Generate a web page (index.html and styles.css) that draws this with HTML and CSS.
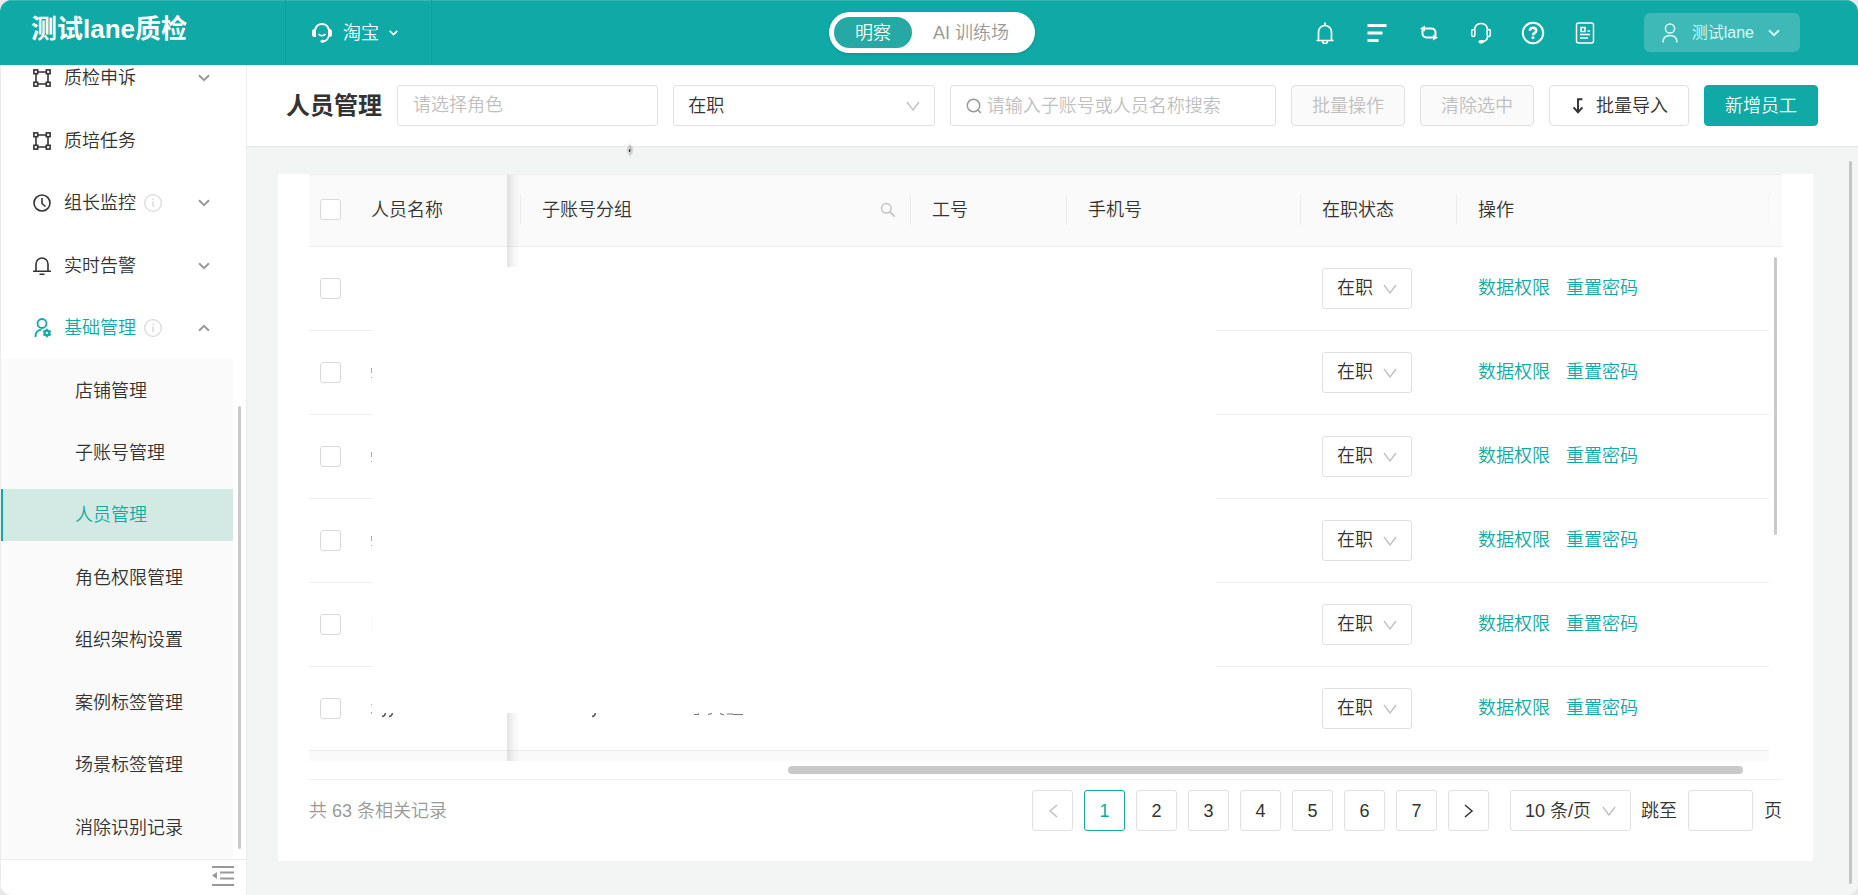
FILE: index.html
```html
<!DOCTYPE html>
<html lang="zh-CN">
<head>
<meta charset="utf-8">
<title>人员管理</title>
<link rel="stylesheet" href="styles.css">
</head>
<body>
<svg class="defs" aria-hidden="true">
  <symbol id="i-headset" viewBox="0 0 22 22"><path d="M4 8C5 4 7.500 2 11 2s6 2 7 6" fill="none" stroke="currentColor" stroke-width="2"/><path d="M5 7v8H3.500A2.500 2.500 0 0 1 1 12.500v-3A2.500 2.500 0 0 1 3.500 7zM17 7v8h1.500a2.500 2.500 0 0 0 2.500-2.500v-3A2.500 2.500 0 0 0 18.500 7z" fill="currentColor"/><path d="M17.500 14.500c-.5 3-2.500 4.500-5.500 4.800M7.500 12c1.800 2.400 5.200 2.400 7 0" fill="none" stroke="currentColor" stroke-width="1.600"/><rect x="9.500" y="17.800" width="4" height="3" rx="1.500" fill="currentColor"/></symbol>
  <symbol id="i-headset2" viewBox="0 0 22 22"><path d="M4.500 8.500C4.500 4 7 1.500 11 1.500s6.500 2.500 6.500 7M17.500 14.500c0 3-2 4.700-5 5" fill="none" stroke="currentColor" stroke-width="1.700"/><rect x="1.700" y="7.500" width="3.200" height="7" rx="1.500" fill="none" stroke="currentColor" stroke-width="1.500"/><rect x="17.100" y="7.500" width="3.200" height="7" rx="1.500" fill="none" stroke="currentColor" stroke-width="1.500"/><rect x="8.500" y="18" width="5.500" height="3.600" rx="1.800" fill="currentColor"/></symbol>
  <symbol id="i-bell" viewBox="0 0 22 22"><path d="M4.500 18.500V10a6.500 6.500 0 0 1 13 0v8.500M2.500 18.500h17M11 .5v2.500" fill="none" stroke="currentColor" stroke-width="1.700"/><path d="M8.500 19a2.500 2.500 0 0 0 5 0" fill="none" stroke="currentColor" stroke-width="1.700"/></symbol>
  <symbol id="i-bell2" viewBox="0 0 18 18"><path d="M3 14V7a6 6 0 0 1 12 0v7M0 14.300h18M6.500 17.300h5" fill="none" stroke="currentColor" stroke-width="1.600"/></symbol>
  <symbol id="i-frame" viewBox="0 0 18 18"><g fill="none" stroke="currentColor" stroke-width="1.600"><path d="M5 3h8M5 15h8M3 5v8M15 5v8"/><rect x=".9" y=".9" width="3.800" height="3.800"/><rect x="13.300" y=".9" width="3.800" height="3.800"/><rect x=".9" y="13.300" width="3.800" height="3.800"/><rect x="13.300" y="13.300" width="3.800" height="3.800"/></g></symbol>
  <symbol id="i-clock" viewBox="0 0 18 18"><g fill="none" stroke="currentColor" stroke-width="1.600"><circle cx="9" cy="9" r="8"/><path d="M9 4v5.500l3.500 3"/></g></symbol>
  <symbol id="i-useradmin" viewBox="0 0 18 20"><g fill="none" stroke="currentColor" stroke-width="1.800"><circle cx="9" cy="5.500" r="4.500"/><path d="M2.500 19c0-4 2-7 6-7.300"/></g><path d="M14 10.800v8.400M10.400 12.900l7.200 4.200M10.400 17.100l7.200-4.200" stroke="currentColor" stroke-width="1.800"/><circle cx="14" cy="15" r="2.400" stroke="currentColor" stroke-width="2.200" fill="#fff"/></symbol>
  <symbol id="i-info" viewBox="0 0 18 18"><circle cx="9" cy="9" r="8.300" fill="none" stroke="currentColor" stroke-width="1.300"/><path d="M9 7.500V13M9 4.500v1.400" stroke="currentColor" stroke-width="1.500"/></symbol>
  <symbol id="i-down" viewBox="0 0 12 8"><path d="M1 1.200l5 5 5-5" fill="none" stroke="currentColor" stroke-width="2"/></symbol>
  <symbol id="i-up" viewBox="0 0 12 8"><path d="M1 6.800l5-5 5 5" fill="none" stroke="currentColor" stroke-width="2"/></symbol>
  <symbol id="i-search" viewBox="0 0 16 16"><circle cx="7.500" cy="7.500" r="6.200" fill="none" stroke="currentColor" stroke-width="1.500"/><path d="M12 12l2.800 3" stroke="currentColor" stroke-width="1.500"/></symbol>
  <symbol id="i-find" viewBox="0 0 16 16"><circle cx="6.300" cy="6.300" r="4.800" fill="none" stroke="currentColor" stroke-width="1.400"/><path d="M9.800 9.800l5 5" stroke="currentColor" stroke-width="1.600"/></symbol>
  <symbol id="i-swap" viewBox="0 0 20 18"><path d="M4 4.500h8.500a4 4 0 0 1 4 4V12M16 13.500H7.500a4 4 0 0 1-4-4V6" fill="none" stroke="currentColor" stroke-width="2"/><path d="M1 4.500l5-3v6zM19 13.500l-5-3v6z" fill="currentColor"/></symbol>
  <symbol id="i-user" viewBox="0 0 16 20"><circle cx="8" cy="5.500" r="4.600" fill="none" stroke="currentColor" stroke-width="1.500"/><path d="M1 19.500c0-4.500 2.500-7 7-7s7 2.500 7 7" fill="none" stroke="currentColor" stroke-width="1.600"/></symbol>
</svg>
<div class="app">
  <header class="topbar">
    <div class="brand">测试lane质检</div>
    <button class="platform"><svg class="ic22"><use href="#i-headset"/></svg><span>淘宝</span><svg class="caret-s"><use href="#i-down"/></svg></button>
    <div class="modes">
      <button class="mode mode-on">明察</button><button class="mode">AI 训练场</button>
    </div>
    <div class="tools">
      <button class="tool" aria-label="通知"><svg class="ic22"><use href="#i-bell"/></svg></button>
      <button class="tool" aria-label="列表"><svg class="ic22" viewBox="0 0 22 22"><path d="M1.500 3.500h19M1.500 11h15M1.500 18.500h11" stroke="currentColor" stroke-width="3"/></svg></button>
      <button class="tool" aria-label="切换"><svg class="ic20"><use href="#i-swap"/></svg></button>
      <button class="tool" aria-label="客服"><svg class="ic22"><use href="#i-headset2"/></svg></button>
      <button class="tool" aria-label="帮助"><svg class="ic24" viewBox="0 0 24 24"><circle cx="12" cy="12" r="10.200" fill="none" stroke="currentColor" stroke-width="2"/><path d="M8.800 9.800c0-4 6.400-4 6.400 0 0 2.200-3.200 2.100-3.200 4.400M12 15.600v2.400" fill="none" stroke="currentColor" stroke-width="2.600"/></svg></button>
      <button class="tool" aria-label="文档"><svg class="ic22" viewBox="0 0 22 22"><g fill="none" stroke="currentColor" stroke-width="1.500"><rect x="2.500" y="1" width="17" height="20" rx="2"/><rect x="7" y="5.500" width="4" height="4"/><path d="M6 12.500h10M6 16h8M13.500 9h2.500"/></g></svg></button>
    </div>
    <button class="account"><svg class="ic-user"><use href="#i-user"/></svg><span>测试lane</span><svg class="caret"><use href="#i-down"/></svg></button>
  </header>

  <div class="body">
    <aside class="sidebar">
      <nav class="menu">
        <ul class="menu-top">
          <li><a class="item" href="#"><svg class="ic18"><use href="#i-frame"/></svg><span>质检申诉</span><svg class="caret end"><use href="#i-down"/></svg></a></li>
          <li><a class="item" href="#"><svg class="ic18"><use href="#i-frame"/></svg><span>质培任务</span></a></li>
          <li><a class="item" href="#"><svg class="ic18"><use href="#i-clock"/></svg><span>组长监控</span><svg class="ic18 info"><use href="#i-info"/></svg><svg class="caret end"><use href="#i-down"/></svg></a></li>
          <li><a class="item" href="#"><svg class="ic18"><use href="#i-bell2"/></svg><span>实时告警</span><svg class="caret end"><use href="#i-down"/></svg></a></li>
          <li><a class="item item-open" href="#"><svg class="ic18 tall"><use href="#i-useradmin"/></svg><span>基础管理</span><svg class="ic18 info"><use href="#i-info"/></svg><svg class="caret end"><use href="#i-up"/></svg></a></li>
        </ul>
        <ul class="submenu">
          <li><a href="#">店铺管理</a></li>
          <li><a href="#">子账号管理</a></li>
          <li><a class="current" href="#">人员管理</a></li>
          <li><a href="#">角色权限管理</a></li>
          <li><a href="#">组织架构设置</a></li>
          <li><a href="#">案例标签管理</a></li>
          <li><a href="#">场景标签管理</a></li>
          <li><a href="#">消除识别记录</a></li>
        </ul>
        <div class="menu-thumb"></div>
      </nav>
      <div class="side-foot"><button class="fold" aria-label="收起菜单"><svg class="ic22" viewBox="0 0 22 22"><path d="M0 2h22M8 7.500h14M8 13.500h14M0 20h22" stroke="currentColor" stroke-width="1.800"/><path d="M0 10.500l5-3.500v7z" fill="currentColor"/></svg></button></div>
    </aside>

    <main class="main">
      <div class="toolbar">
        <h1>人员管理</h1>
        <input class="field role" type="text" placeholder="请选择角色" aria-label="角色">
        <div class="select wide"><select aria-label="在职状态筛选"><option>在职</option></select><svg class="arrow" viewBox="0 0 14 10"><path d="M1 1l6 8 6-8"/></svg></div>
        <label class="field search"><svg class="ic16"><use href="#i-search"/></svg><input type="text" placeholder="请输入子账号或人员名称搜索" aria-label="搜索"></label>
        <button class="btn" disabled>批量操作</button>
        <button class="btn" disabled>清除选中</button>
        <button class="btn btn-icon"><svg class="ic16" viewBox="0 0 16 18"><path d="M13 1.500H8V15M3 10.500l5 5.500 5-5.500" fill="none" stroke="currentColor" stroke-width="2.200"/></svg><span>批量导入</span></button>
        <button class="btn btn-primary">新增员工</button>
        <svg class="spark" viewBox="0 0 12 20"><defs><radialGradient id="sg"><stop offset="0" stop-color="#888" stop-opacity=".7"/><stop offset="1" stop-color="#888" stop-opacity="0"/></radialGradient></defs><ellipse cx="6" cy="10" rx="4" ry="6" fill="url(#sg)"/><ellipse cx="6" cy="10" rx="1" ry="10" fill="url(#sg)"/><path d="M5 8h1v5H5z" fill="#fff"/><path d="M5 9h1v3H5z" fill="#333"/></svg>
      </div>

      <div class="content">
        <section class="panel">
          <div class="table-wrap">
            <table>
              <colgroup><col class="c-check"><col class="c-name"><col><col class="c-no"><col class="c-phone"><col class="c-state"><col class="c-act"><col class="c-bar"></colgroup>
              <thead><tr>
                <th class="check"><input type="checkbox" aria-label="全选"></th>
                <th>人员名称</th>
                <th><div class="th-search"><span>子账号分组</span><svg class="ic16"><use href="#i-find"/></svg></div></th>
                <th>工号</th><th>手机号</th><th>在职状态</th><th class="last">操作</th><th class="bar"></th>
              </tr></thead>
              <tbody>
                <tr><td class="check"><input type="checkbox" aria-label="选择第1行"></td><td></td><td></td><td></td><td></td><td><div class="select"><select aria-label="状态1"><option>在职</option></select><svg class="arrow" viewBox="0 0 14 10"><path d="M1 1l6 8 6-8"/></svg></div></td><td><div class="acts"><a href="#">数据权限</a><a href="#">重置密码</a></div></td><td class="bar"></td></tr>
                <tr><td class="check"><input type="checkbox" aria-label="选择第2行"></td><td><svg class="bit" viewBox="0 0 2 12"><path d="M0 2h1v5H0zM0 11h1v1H0z"/></svg></td><td></td><td></td><td></td><td><div class="select"><select aria-label="状态2"><option>在职</option></select><svg class="arrow" viewBox="0 0 14 10"><path d="M1 1l6 8 6-8"/></svg></div></td><td><div class="acts"><a href="#">数据权限</a><a href="#">重置密码</a></div></td><td class="bar"></td></tr>
                <tr><td class="check"><input type="checkbox" aria-label="选择第3行"></td><td><svg class="bit" viewBox="0 0 2 12"><path d="M0 2h1v5H0zM0 11h1v1H0z"/></svg></td><td></td><td></td><td></td><td><div class="select"><select aria-label="状态3"><option>在职</option></select><svg class="arrow" viewBox="0 0 14 10"><path d="M1 1l6 8 6-8"/></svg></div></td><td><div class="acts"><a href="#">数据权限</a><a href="#">重置密码</a></div></td><td class="bar"></td></tr>
                <tr><td class="check"><input type="checkbox" aria-label="选择第4行"></td><td><svg class="bit" viewBox="0 0 2 12"><path d="M0 2h1v5H0zM0 11h1v1H0z"/></svg></td><td></td><td></td><td></td><td><div class="select"><select aria-label="状态4"><option>在职</option></select><svg class="arrow" viewBox="0 0 14 10"><path d="M1 1l6 8 6-8"/></svg></div></td><td><div class="acts"><a href="#">数据权限</a><a href="#">重置密码</a></div></td><td class="bar"></td></tr>
                <tr><td class="check"><input type="checkbox" aria-label="选择第5行"></td><td><svg class="bit pale" viewBox="0 0 2 12"><path d="M0 0h1v12H0z"/></svg></td><td></td><td></td><td></td><td><div class="select"><select aria-label="状态5"><option>在职</option></select><svg class="arrow" viewBox="0 0 14 10"><path d="M1 1l6 8 6-8"/></svg></div></td><td><div class="acts"><a href="#">数据权限</a><a href="#">重置密码</a></div></td><td class="bar"></td></tr>
                <tr><td class="check"><input type="checkbox" aria-label="选择第6行"></td><td><svg class="bit" viewBox="0 0 2 12"><path d="M0 2h1v1H0zM0 10h1v2H0z"/></svg></td><td></td><td></td><td></td><td><div class="select"><select aria-label="状态6"><option>在职</option></select><svg class="arrow" viewBox="0 0 14 10"><path d="M1 1l6 8 6-8"/></svg></div></td><td><div class="acts"><a href="#">数据权限</a><a href="#">重置密码</a></div></td><td class="bar"></td></tr>
                <tr class="peek"><td colspan="7"></td><td class="bar"></td></tr>
              </tbody>
            </table>
            <div class="fixed-shadow"></div>
            <div class="cover"><svg class="remains" viewBox="0 0 400 5"><path d="M9 3.500c2 0 3-1 3.500-3.500M16 3.500c2 0 3-1 3.500-3.500M219 3.500c2 0 3-1 3.500-3.500" fill="none" stroke="#555" stroke-width="1.400"/><path d="M321 1.500h4l1-1M335 1.500l4-1M347 .5l4 1.500M354 1h6M360 1.500h10" fill="none" stroke="#777" stroke-width="1.200"/></svg></div>
            <div class="v-thumb"></div>
          </div>
          <div class="h-track"><div class="h-thumb"></div></div>
          <footer class="pager">
            <span class="total">共 63 条相关记录</span>
            <div class="pages">
              <button class="page off" aria-label="上一页"><svg class="ic-pg" viewBox="0 0 10 14"><path d="M9 1L2 7l7 6"/></svg></button>
              <button class="page on">1</button><button class="page">2</button><button class="page">3</button><button class="page">4</button><button class="page">5</button><button class="page">6</button><button class="page">7</button>
              <button class="page" aria-label="下一页"><svg class="ic-pg" viewBox="0 0 10 14"><path d="M1 1l7 6-7 6"/></svg></button>
            </div>
            <div class="select size"><select aria-label="每页条数"><option>10 条/页</option></select><svg class="arrow" viewBox="0 0 14 10"><path d="M1 1l6 8 6-8"/></svg></div>
            <label class="jump"><span>跳至</span><input class="field" type="text"><span>页</span></label>
          </footer>
        </section>
        <div class="page-thumb"></div>
      </div>
    </main>
  </div>
</div>
</body>
</html>
```
FILE: styles.css
```css
* { box-sizing: border-box; }
body {
  margin: 0;
  background: #e6eaea;
  color: #333;
  font: 350 18px/26px "Liberation Sans", "Noto Sans CJK SC", sans-serif;
}
button, input, select { font: inherit; color: inherit; }
button { padding: 0; border: 0; background: none; }
a { color: inherit; text-decoration: none; }
ul { margin: 0; padding: 0; list-style: none; }
svg { display: block; flex: none; }
.defs { position: absolute; width: 0; height: 0; }
.ic16 { width: 16px; height: 16px; }
.ic18 { width: 18px; height: 18px; }
.ic18.tall { height: 20px; }
.ic20 { width: 20px; height: 18px; }
.ic22 { width: 22px; height: 22px; }
.ic24 { width: 24px; height: 24px; }
.ic-user { width: 16px; height: 20px; }
.caret { width: 12px; height: 8px; }
.caret-s { width: 9px; height: 6px; }

.app {
  display: flex;
  flex-direction: column;
  height: 100vh;
  overflow: hidden;
  border-radius: 12px;
  background: #fff;
}

/* top bar */
.topbar {
  position: relative;
  display: flex;
  flex: none;
  align-items: center;
  height: 65px;
  padding-right: 58px;
  background: #0fa9a6;
  box-shadow: inset 0 1px #3bb5b0;
  color: #fff;
}
.brand {
  align-self: stretch;
  width: 285px;
  padding: 11px 0 0 31px;
  font-size: 26px;
  line-height: 36px;
  font-weight: 700;
}
.platform {
  display: flex;
  align-items: center;
  align-self: stretch;
  gap: 10px;
  padding: 0 33px 0 25px;
  border: solid #1a9b99;
  border-width: 0 1px;
}
.modes {
  position: absolute;
  left: 50%;
  display: flex;
  margin-left: -100px;
  padding: 5px;
  border-radius: 21px;
  background: #fff;
  box-shadow: 0 1px 3px rgba(0, 0, 0, .15);
}
.mode {
  height: 31px;
  padding: 0 21px;
  border-radius: 16px;
  color: #999;
}
.mode-on { background: #26a9a5; color: #fff; }
.tools { display: flex; margin-left: auto; }
.tool { display: grid; place-items: center; width: 52px; height: 52px; }
.account {
  display: flex;
  align-items: center;
  gap: 14px;
  height: 39px;
  margin-left: 33px;
  padding: 0 20px 0 18px;
  border-radius: 6px;
  background: #3fb9b7;
  color: #d3fff9;
  font-size: 16px;
}

/* sidebar */
.body { display: flex; flex: 1; min-height: 0; }
.sidebar {
  display: flex;
  flex-direction: column;
  flex: none;
  width: 247px;
  border: solid #ececec;
  border-width: 0 1px;
}
.menu {
  position: relative;
  display: flex;
  flex: 1;
  flex-direction: column;
  min-height: 0;
  overflow: hidden;
}
.menu-top { display: flex; flex: 5; flex-direction: column; margin-top: -18px; }
.submenu { display: flex; flex: 8; flex-direction: column; margin-right: 13px; background: #fafafa; }
.menu li { display: flex; flex: 1; flex-direction: column; justify-content: center; }
.item { display: flex; align-items: center; padding-left: 32px; }
.item span { margin: 0 8px 0 13px; }
.item .end { margin: 0 36px 0 auto; color: #999; }
.item .info { color: #d9d9d9; }
.item-open { color: #0fa9a6; }
.submenu a { padding: 13px 0 13px 74px; }
.submenu .current {
  margin-left: -1px;
  padding-left: 72px;
  border-left: 3px solid #0fa9a6;
  background: #d3e9e3;
  color: #0fa9a6;
}
.menu-thumb {
  position: absolute;
  right: 5px;
  top: 43%;
  bottom: 10px;
  width: 3px;
  border-radius: 2px;
  background: #c9c9c9;
}
.side-foot {
  display: flex;
  justify-content: flex-end;
  align-items: center;
  height: 36px;
  padding: 0 12px 4px 0;
  border-top: 1px solid #ececec;
}
.fold { color: #999; }

/* toolbar */
.main { display: flex; flex: 1; flex-direction: column; min-width: 0; }
.toolbar {
  position: relative;
  z-index: 1;
  display: flex;
  flex: none;
  align-items: center;
  gap: 15px;
  height: 82px;
  padding: 0 40px 0 39px;
  border-bottom: 1px solid #e8e9e9;
}
h1 { margin: 0; font-size: 24px; line-height: 32px; white-space: nowrap; }
.field {
  height: 41px;
  border: 1px solid #e0e0e0;
  border-radius: 3px;
  background: #fff;
}
::placeholder { color: #bfbfbf; opacity: 1; }
.role { flex: 1 1 260px; min-width: 0; padding: 0 15px; }
.search { display: flex; flex: 1 1 325px; align-items: center; gap: 5px; min-width: 0; padding: 0 15px; color: #999; }
.search input { flex: 1; min-width: 0; padding: 0; border: 0; outline: 0; }
.select { position: relative; width: 90px; }
.select.wide { flex: 1 1 260px; width: auto; }
.select.size { width: 121px; }
.select select {
  display: block;
  width: 100%;
  height: 41px;
  padding: 0 14px;
  border: 1px solid #e0e0e0;
  border-radius: 3px;
  background: #fff;
  appearance: none;
}
.arrow {
  position: absolute;
  right: 15px;
  top: 16px;
  width: 14px;
  height: 10px;
  fill: none;
  stroke: #bfbfbf;
  stroke-width: 1.3;
  pointer-events: none;
}
.btn {
  flex: none;
  height: 41px;
  padding: 0 20px;
  border: 1px solid #e0e0e0;
  border-radius: 4px;
  background: #fff;
}
.btn:disabled { background: #fafafa; color: #bfbfbf; }
.btn-icon { display: flex; align-items: center; gap: 10px; }
.btn-primary { border-color: #0fa9a6; background: #0fa9a6; color: #fff; }
.spark { position: absolute; left: 377px; bottom: -14px; width: 12px; height: 20px; }

/* content */
.content { position: relative; flex: 1; min-height: 0; padding: 27px 45px 0 31px; background: #f3f5f5; }
.panel { padding: 0 31px 30px; background: #fff; }
.table-wrap { position: relative; }
table { width: 100%; border-spacing: 0; table-layout: fixed; }
.c-check { width: 41px; }
.c-name { width: 171px; }
.c-no, .c-state { width: 156px; }
.c-phone { width: 234px; }
.c-act { width: 312px; }
.c-bar { width: 13px; }
th {
  position: relative;
  height: 73px;
  padding: 0 15px 2px 21px;
  border: solid #eee;
  border-width: 1px 0;
  background: #fafafa;
  font-weight: inherit;
  text-align: left;
}
th:not(.check):not(.bar)::after {
  content: "";
  position: absolute;
  right: 0;
  top: 20px;
  width: 1px;
  height: 30px;
  background: #ebebeb;
}
th.last:not(.check)::after { background: #f4f4f4; }
.th-search { display: flex; align-items: center; justify-content: space-between; }
.th-search svg { color: #bfbfbf; }
td { height: 84px; padding: 0 0 1px 21px; border-bottom: 1px solid #eee; }
th.check { padding: 0 0 2px 11px; }
td.check { padding: 0 0 1px 11px; }
td.bar { padding: 0; border: 0; }
.peek td { height: 10px; padding: 0; border: 0; background: #fafafa; }
.peek .bar { background: none; }
input[type="checkbox"] {
  display: block;
  width: 21px;
  height: 21px;
  margin: 0;
  border: 1px solid #d9d9d9;
  border-radius: 3px;
  background: #fff;
  appearance: none;
}
.acts { display: flex; gap: 16px; color: #0fa9a6; }
.bit { width: 2px; height: 12px; fill: #e0a050; }
.bit.pale { fill: #ffffb0; }
.fixed-shadow {
  position: absolute;
  left: 198px;
  top: 1px;
  bottom: 0;
  width: 13px;
  background: linear-gradient(90deg, rgba(0, 0, 0, .11), rgba(0, 0, 0, .04) 50%, transparent);
}
.cover {
  position: absolute;
  left: 64px;
  right: 566px;
  top: 93px;
  bottom: 48px;
  background: #fff;
}
.remains { position: absolute; left: 0; top: 100%; width: 400px; height: 5px; }
.v-thumb {
  position: absolute;
  right: 5px;
  top: 83px;
  width: 3px;
  height: 278px;
  border-radius: 2px;
  background: #c9c9c9;
}
.h-track { padding: 5px 39px 5px 479px; border-bottom: 1px solid #eee; }
.h-thumb { height: 8px; border-radius: 4px; background: #c9c9c9; }

/* pagination */
.pager { display: flex; align-items: center; padding-top: 10px; }
.total { margin-right: auto; color: #999; }
.pages { display: flex; gap: 11px; margin-right: 21px; }
.page {
  display: grid;
  place-items: center;
  width: 41px;
  height: 41px;
  border: 1px solid #e0e0e0;
  border-radius: 3px;
  background: #fff;
}
.page.on { border-color: #0fa9a6; color: #0fa9a6; }
.page.off { color: #bfbfbf; }
.ic-pg { width: 10px; height: 14px; fill: none; stroke: currentColor; stroke-width: 1.5; }
.jump { display: flex; align-items: center; gap: 11px; margin-left: 10px; }
.jump input { width: 65px; padding: 0 10px; }
.page-thumb {
  position: absolute;
  right: 6px;
  top: 14px;
  bottom: 11px;
  width: 3px;
  border-radius: 2px;
  background: #c4c4c4;
}
```
